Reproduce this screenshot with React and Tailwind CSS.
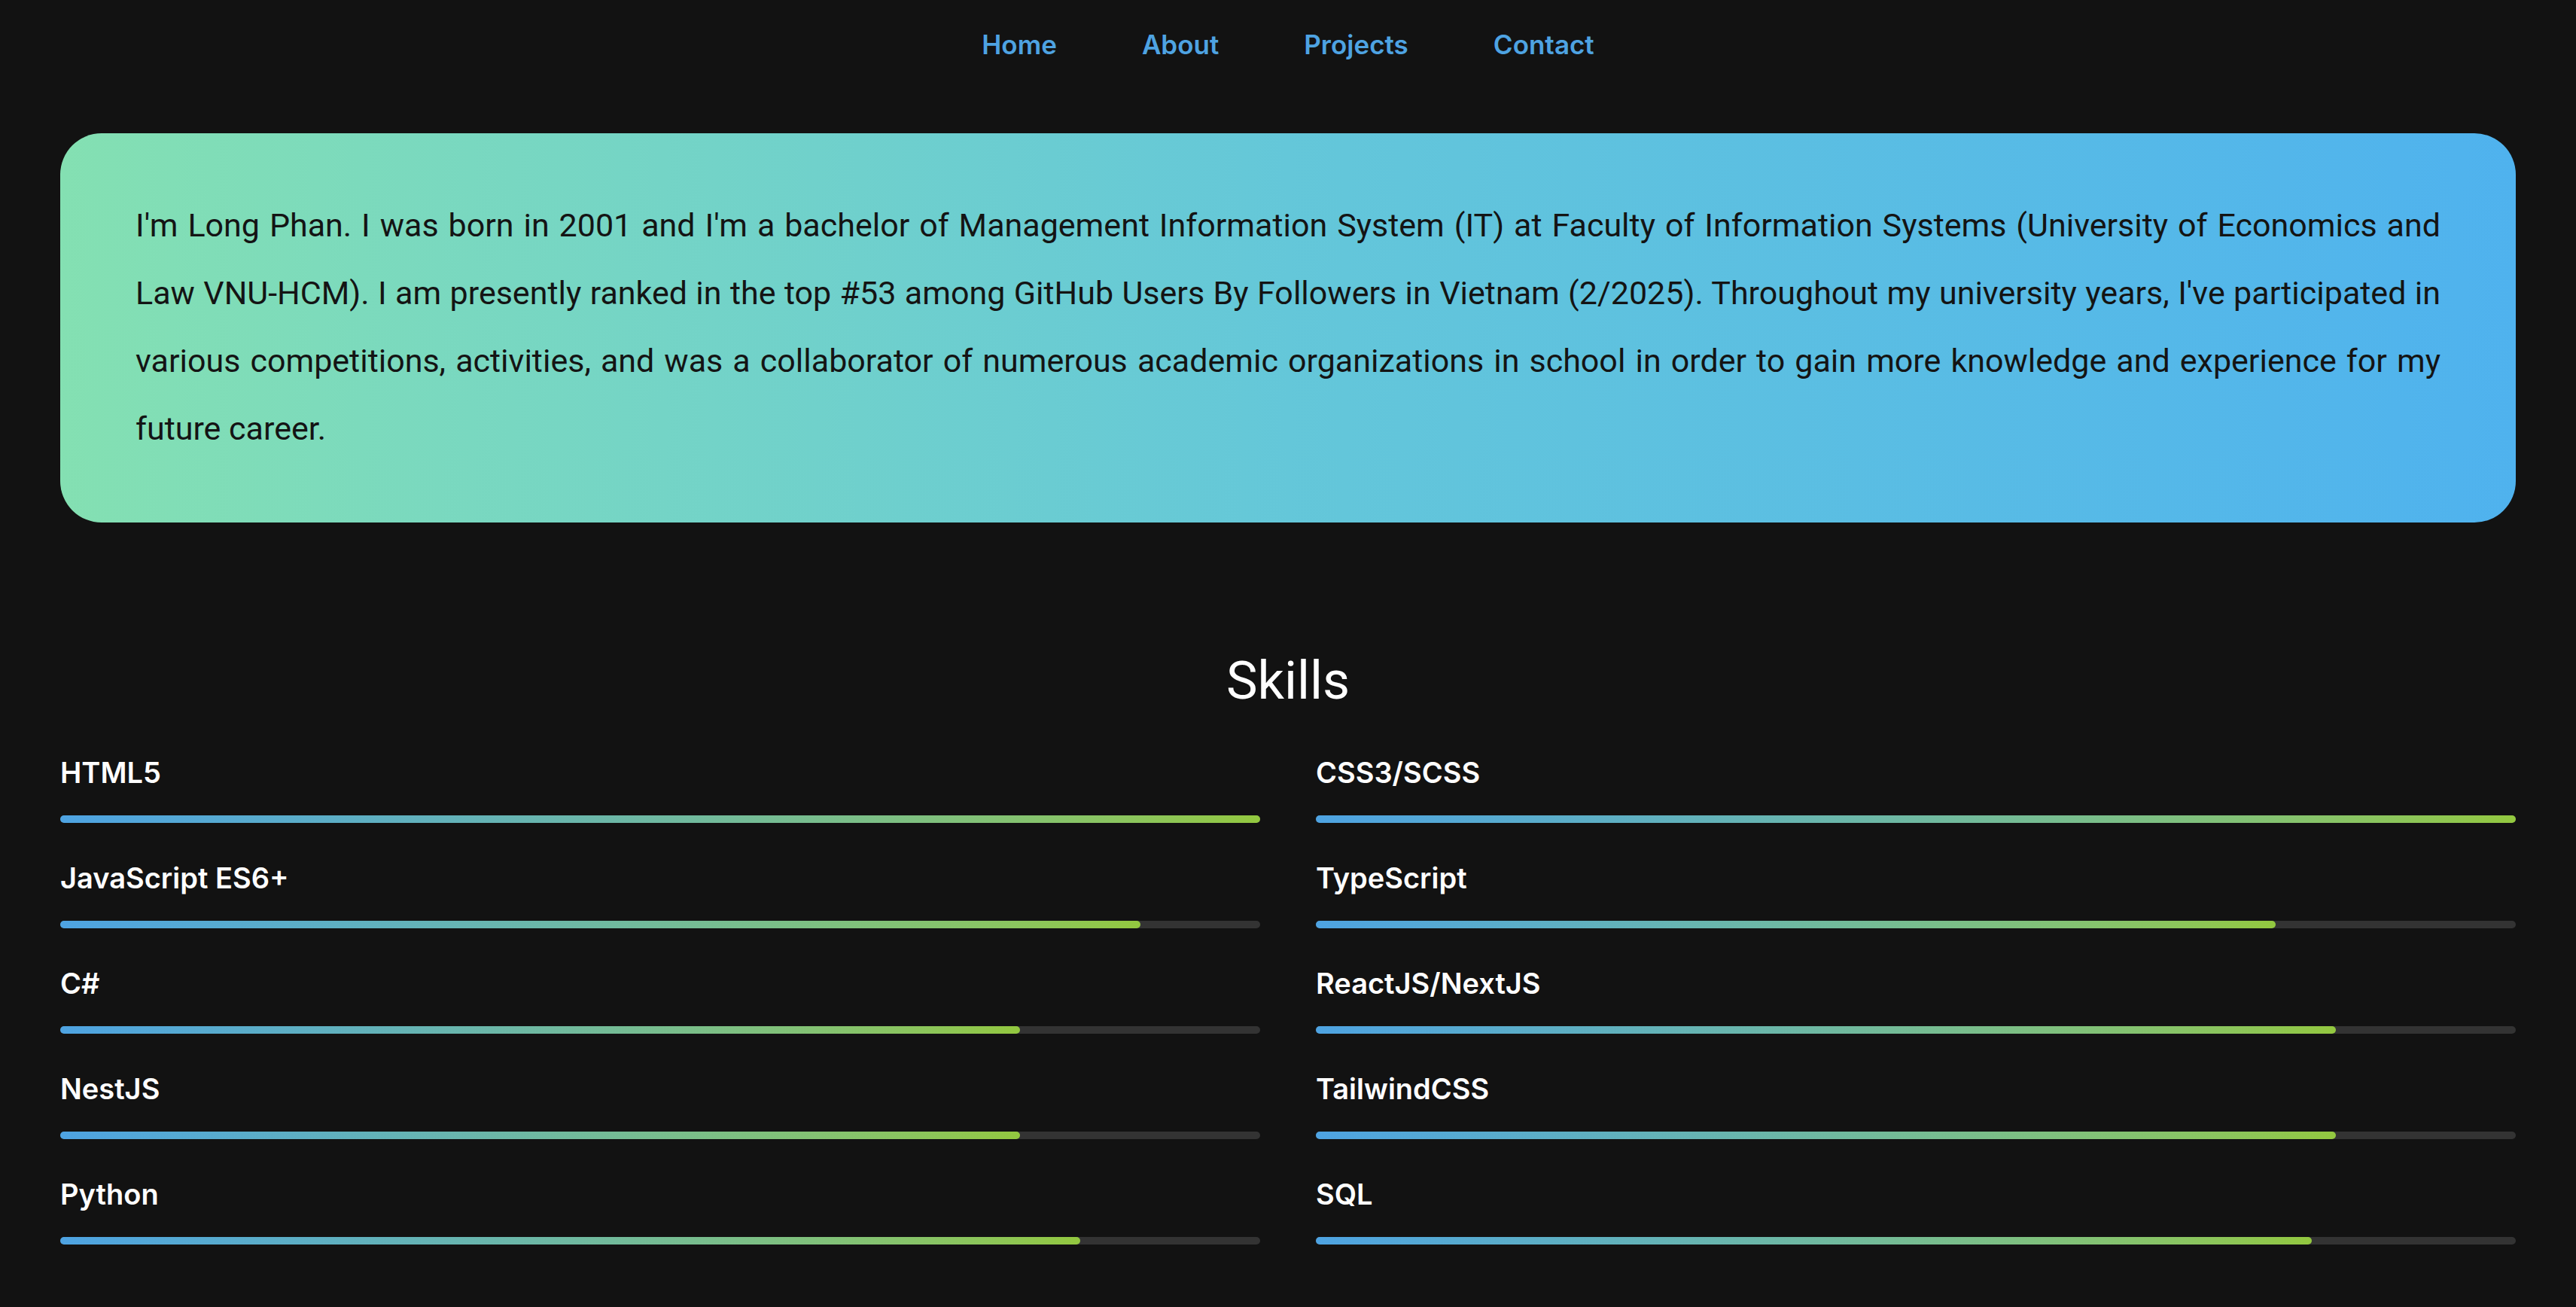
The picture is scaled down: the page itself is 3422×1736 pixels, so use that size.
export default function App() {
  const left = [["HTML5", 100], ["JavaScript ES6+", 90], ["C#", 80], ["NestJS", 80], ["Python", 85]];
  const right = [["CSS3/SCSS", 100], ["TypeScript", 80], ["ReactJS/NextJS", 85], ["TailwindCSS", 85], ["SQL", 83]];
  const Col = ({ items }) => (
    <div className="flex flex-col">
      {items.map(([n, p]) => (
        <div key={n} className="h-[140px] pt-[12px]">
          <div className="text-[38px] font-semibold text-white leading-[50px]">{n}</div>
          <div className="mt-[32px] h-[10px] rounded-full bg-[#333]">
            <div className="h-full rounded-full bg-gradient-to-r from-[#4ea3e2] to-[#93c83f]" style={{ width: p + "%" }} />
          </div>
        </div>
      ))}
    </div>
  );
  return (
    <div className="min-h-[1736px] bg-[#121212] px-[80px] font-[Inter,sans-serif]">
      <nav className="flex justify-center gap-[113px] pt-[36px] text-[35px] font-semibold text-[#4ea3e2] leading-[46px]">
        <span>Home</span><span>About</span><span>Projects</span><span>Contact</span>
      </nav>
      <div className="mt-[95px] rounded-[55px] bg-gradient-to-r from-[#84e0b2] via-[#64c7d9] to-[#4fb2ee] px-[100px] pt-[77px] pb-[80px]">
        <p className="text-justify text-[43px] leading-[90px] text-[#141414] font-[Roboto,sans-serif]">
          I'm Long Phan. I was born in 2001 and I'm a bachelor of Management Information System (IT) at Faculty of Information Systems (University of Economics and Law VNU-HCM). I am presently ranked in the top #53 among GitHub Users By Followers in Vietnam (2/2025). Throughout my university years, I've participated in various competitions, activities, and was a collaborator of numerous academic organizations in school in order to gain more knowledge and experience for my future career.
        </p>
      </div>
      <h2 className="mt-[165px] text-center text-[70px] text-white font-[Roboto,sans-serif] leading-[90px]">Skills</h2>
      <div className="mt-[40px] grid grid-cols-2 gap-x-[74px]">
        <Col items={left} />
        <Col items={right} />
      </div>
    </div>
  );
}
